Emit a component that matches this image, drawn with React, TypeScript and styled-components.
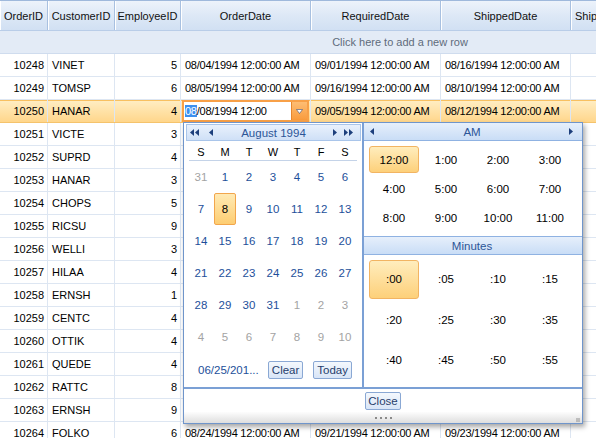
import styled, { createGlobalStyle, css } from "styled-components";

const GlobalStyle = createGlobalStyle`
  html, body { margin: 0; padding: 0; background: #fff; overflow: hidden; }
  body {
    font-family: "Liberation Sans", Arial, sans-serif;
    font-size: 11px;
    color: #000;
  }
`;

const COLS = "48px 67px 66px 130px 130px 130px 229px";

const Page = styled.div`
  position: relative;
  width: 596px;
  height: 438px;
  overflow: hidden;
`;

const Grid = styled.div`
  width: 800px;
`;

const HeaderRow = styled.div`
  display: grid;
  grid-template-columns: ${COLS};
  height: 31px;
  box-sizing: border-box;
  border-top: 1px solid #9fb9dc;
  border-bottom: 1px solid #b9cde8;
  background: linear-gradient(#edf3fb, #dde8f6 50%, #d1e0f3);
`;

const HeadCell = styled.div<{ $left?: boolean }>`
  display: flex;
  align-items: center;
  justify-content: ${(p) => (p.$left ? "flex-start" : "center")};
  padding-left: ${(p) => (p.$left ? "4px" : "0")};
  border-right: 1px solid #a8c0e0;
  box-shadow: inset 1px 0 0 #fff;
  white-space: nowrap;
  overflow: hidden;
  color: #111;
`;

const AddRow = styled.div`
  height: 23px;
  box-sizing: border-box;
  background: #e3ebf6;
  border-bottom: 1px solid #cfdcee;
  display: flex;
  align-items: center;
  justify-content: center;
  color: #5f6b7c;
`;

const Row = styled.div<{ $active?: boolean }>`
  display: grid;
  grid-template-columns: ${COLS};
  height: 23px;
  box-sizing: border-box;
  border-bottom: 1px solid #dde6f2;
  ${(p) =>
    p.$active &&
    css`
      background: linear-gradient(#ffeec4, #ffd68b);
      border-bottom-color: #f5c36c;
      box-shadow: inset 0 1px 0 #f8c060;
    `}
`;

const Cell = styled.div<{ $right?: boolean }>`
  display: flex;
  align-items: center;
  justify-content: ${(p) => (p.$right ? "flex-end" : "flex-start")};
  padding: 0 ${(p) => (p.$right ? "3px" : "4px")} 0 4px;
  border-right: 1px solid #dde6f2;
  white-space: nowrap;
  overflow: hidden;
`;

const DateCell = styled(Cell)`
  padding-left: 4px;
  letter-spacing: -0.25px;
`;

const EditCell = styled.div`
  display: flex;
  padding: 0 1px;
  border-right: 1px solid #dde6f2;
`;

const Editor = styled.div`
  flex: 1;
  display: flex;
  height: 22px;
  box-sizing: border-box;
  border: 2px solid #f8a047;
  background: #fff;
`;

const EditText = styled.div`
  flex: 1;
  display: flex;
  align-items: center;
  padding-left: 1px;
  letter-spacing: -0.25px;
  white-space: nowrap;
`;

const Highlight = styled.span`
  background: #3c8fef;
  color: #fff;
`;

const DropButton = styled.div`
  width: 15px;
  display: flex;
  align-items: center;
  justify-content: center;
  background: linear-gradient(#fdbd74, #f99b3c);
  border-left: 1px solid #e7872e;
`;

/* ---------- popup ---------- */

const Popup = styled.div`
  position: absolute;
  left: 183px;
  top: 122px;
  width: 400px;
  box-sizing: border-box;
  border: 1px solid #6f95cb;
  background: #fff;
  box-shadow: 2px 3px 5px rgba(0, 0, 0, 0.35);
`;

const Panels = styled.div`
  display: flex;
  height: 264px;
  border-bottom: 2px solid #7ba0d5;
`;

const Calendar = styled.div`
  width: 178px;
  border-right: 2px solid #7ba0d5;
  display: flex;
  flex-direction: column;
`;

const CalHeader = styled.div`
  display: flex;
  align-items: center;
  height: 17px;
  margin: 1px 1px 0 2px;
  box-sizing: border-box;
  border: 1px solid #a9c5ea;
  background: linear-gradient(#e9f1fc, #cfe0f7);
  padding: 0 6px 0 3px;
  color: #2c5597;
`;

const NavGroup = styled.div<{ $gap: number }>`
  display: flex;
  align-items: center;
  gap: ${(p) => p.$gap}px;
`;

const Title = styled.div`
  flex: 1;
  text-align: center;
  font-size: 11.5px;
`;

const DayNames = styled.div`
  display: grid;
  grid-template-columns: repeat(7, 24px);
  height: 14px;
  margin: 4px 0 0 5px;
  padding-bottom: 1px;
  border-bottom: 1px solid #c4d3e8;
  width: 168px;
`;

const DayName = styled.div`
  text-align: center;
  line-height: 14px;
`;

const Days = styled.div`
  display: grid;
  grid-template-columns: repeat(7, 24px);
  grid-auto-rows: 32px;
  margin-left: 5px;
`;

const Day = styled.div<{ $muted?: boolean; $selected?: boolean }>`
  display: flex;
  align-items: center;
  justify-content: center;
  color: ${(p) => (p.$muted ? "#a3a3a3" : "#1d4f9a")};
  font-size: 11.5px;
  ${(p) =>
    p.$selected &&
    css`
      margin: 0 1px;
      border: 1px solid #f2a64c;
      border-radius: 2px;
      background: linear-gradient(#ffeab4, #fdcd72);
      color: #000;
    `}
`;

const CalFooter = styled.div`
  flex: 1;
  display: flex;
  align-items: center;
  padding: 0 0 0 14px;
`;

const Picked = styled.span`
  width: 70px;
  color: #1d4f9a;
  white-space: nowrap;
  font-size: 11.5px;
`;

const SmallButton = styled.button`
  font-family: inherit;
  font-size: 11.5px;
  color: #263d6b;
  height: 18px;
  padding: 0 3px;
  margin-right: 10px;
  border: 1px solid #8aa8d4;
  border-radius: 2px;
  background: linear-gradient(#f4f8fd, #d8e5f7);
  line-height: 14px;
`;

const TimePanel = styled.div`
  flex: 1;
  display: flex;
  flex-direction: column;
`;

const TimeHeader = styled.div<{ $top?: boolean }>`
  display: flex;
  align-items: center;
  height: 18px;
  box-sizing: border-box;
  padding: 0 8px 0 6px;
  background: linear-gradient(#e6effb, #c9ddf6);
  border-bottom: 1px solid #8fb2e2;
  ${(p) =>
    p.$top &&
    css`
      border-top: 1px solid #8fb2e2;
      margin-top: 4px;
      height: 19px;
    `}
  color: #2c5597;
  font-size: 11.5px;
`;

const TimeGrid = styled.div<{ $row: number }>`
  display: grid;
  grid-template-columns: repeat(4, 52px);
  grid-auto-rows: ${(p) => p.$row}px;
  margin: 4px 0 0 4px;
`;

const TimeCell = styled.div<{ $selected?: boolean }>`
  display: flex;
  align-items: center;
  justify-content: center;
  font-size: 11.5px;
  ${(p) =>
    p.$selected &&
    css`
      margin: 1px;
      border: 1px solid #f2b462;
      border-radius: 3px;
      background: linear-gradient(#ffedbd, #fdd07a);
    `}
`;

const CloseBar = styled.div`
  height: 23px;
  display: flex;
  align-items: center;
  justify-content: center;
`;

const CloseButton = styled(SmallButton)`
  margin: 1px 0 0 0;
  padding: 0 2px;
`;

const Grip = styled.div`
  position: relative;
  height: 11px;
  background: linear-gradient(#fdfdfd, #dedede);
  display: flex;
  align-items: center;
  justify-content: center;
  gap: 3px;
`;

const Dot = styled.span`
  width: 2px;
  height: 2px;
  background: #8a8a8a;
`;

const Resize = styled.span`
  position: absolute;
  right: 2px;
  bottom: 1px;
  width: 4px;
  height: 4px;
  background: radial-gradient(circle, #8a8a8a 0.6px, transparent 0.8px) 0 0 / 2px 2px;
`;

function Tri({ dir, double }: { dir: "l" | "r"; double?: boolean }) {
  const one = dir === "l" ? "M4 0 L0 3.5 L4 7Z" : "M0 0 L4 3.5 L0 7Z";
  const two = dir === "l" ? "M9 0 L5 3.5 L9 7Z" : "M5 0 L9 3.5 L5 7Z";
  return (
    <svg width={double ? 10 : 5} height="7" viewBox={`0 0 ${double ? 10 : 5} 7`}>
      <path d={one} fill="#1d3f7c" />
      {double && <path d={two} fill="#1d3f7c" />}
    </svg>
  );
}

const rows: [number, string, number, string, string, string][] = [
  [10248, "VINET", 5, "08/04/1994", "09/01/1994", "08/16/1994"],
  [10249, "TOMSP", 6, "08/05/1994", "09/16/1994", "08/10/1994"],
  [10250, "HANAR", 4, "08/08/1994", "09/05/1994", "08/12/1994"],
  [10251, "VICTE", 3, "08/08/1994", "09/05/1994", "08/15/1994"],
  [10252, "SUPRD", 4, "08/09/1994", "09/06/1994", "08/11/1994"],
  [10253, "HANAR", 3, "08/10/1994", "08/24/1994", "08/16/1994"],
  [10254, "CHOPS", 5, "08/11/1994", "09/08/1994", "08/23/1994"],
  [10255, "RICSU", 9, "08/12/1994", "09/09/1994", "08/15/1994"],
  [10256, "WELLI", 3, "08/15/1994", "09/12/1994", "08/17/1994"],
  [10257, "HILAA", 4, "08/16/1994", "09/13/1994", "08/22/1994"],
  [10258, "ERNSH", 1, "08/17/1994", "09/14/1994", "08/23/1994"],
  [10259, "CENTC", 4, "08/18/1994", "09/15/1994", "08/25/1994"],
  [10260, "OTTIK", 4, "08/19/1994", "09/16/1994", "08/29/1994"],
  [10261, "QUEDE", 4, "08/19/1994", "09/16/1994", "08/30/1994"],
  [10262, "RATTC", 8, "08/22/1994", "09/19/1994", "08/25/1994"],
  [10263, "ERNSH", 9, "08/23/1994", "09/20/1994", "08/31/1994"],
  [10264, "FOLKO", 6, "08/24/1994", "09/21/1994", "09/23/1994"],
];

const T = " 12:00:00 AM";

// rows whose date cells lie under the open picker
const covered = (id: number) => id > 10250 && id < 10264;

const weeks = [
  [31, 1, 2, 3, 4, 5, 6],
  [7, 8, 9, 10, 11, 12, 13],
  [14, 15, 16, 17, 18, 19, 20],
  [21, 22, 23, 24, 25, 26, 27],
  [28, 29, 30, 31, 1, 2, 3],
  [4, 5, 6, 7, 8, 9, 10],
];

const hours = ["12:00", "1:00", "2:00", "3:00", "4:00", "5:00", "6:00", "7:00", "8:00", "9:00", "10:00", "11:00"];
const minutes = [":00", ":05", ":10", ":15", ":20", ":25", ":30", ":35", ":40", ":45", ":50", ":55"];

export default function App() {
  return (
    <Page>
      <GlobalStyle />
      <Grid>
        <HeaderRow>
          <HeadCell>OrderID</HeadCell>
          <HeadCell>CustomerID</HeadCell>
          <HeadCell>EmployeeID</HeadCell>
          <HeadCell>OrderDate</HeadCell>
          <HeadCell>RequiredDate</HeadCell>
          <HeadCell>ShippedDate</HeadCell>
          <HeadCell $left>Ship</HeadCell>
        </HeaderRow>
        <AddRow>Click here to add a new row</AddRow>
        {rows.map(([id, cust, emp, od, rd, sd]) => {
          const active = id === 10250;
          const hide = covered(id);
          return (
            <Row key={id} $active={active}>
              <Cell $right>{id}</Cell>
              <Cell>{cust}</Cell>
              <Cell $right>{emp}</Cell>
              {active ? (
                <EditCell>
                  <Editor>
                    <EditText>
                      <Highlight>08</Highlight>/08/1994 12:00
                    </EditText>
                    <DropButton>
                      <svg width="7" height="5" viewBox="0 0 7 5">
                        <path d="M0.5 0.5 L6.5 0.5 L3.5 4.5Z" fill="#fff" stroke="#3a4f7a" strokeWidth="0.6" />
                      </svg>
                    </DropButton>
                  </Editor>
                </EditCell>
              ) : (
                <DateCell>{hide ? "" : od + T}</DateCell>
              )}
              <DateCell>{hide ? "" : rd + T}</DateCell>
              <DateCell>{hide ? "" : sd + T}</DateCell>
              <Cell />
            </Row>
          );
        })}
      </Grid>

      <Popup>
        <Panels>
          <Calendar>
            <CalHeader>
              <NavGroup $gap={9}>
                <Tri dir="l" double />
                <Tri dir="l" />
              </NavGroup>
              <Title>August 1994</Title>
              <NavGroup $gap={6}>
                <Tri dir="r" />
                <Tri dir="r" double />
              </NavGroup>
            </CalHeader>
            <DayNames>
              {["S", "M", "T", "W", "T", "F", "S"].map((d, i) => (
                <DayName key={i}>{d}</DayName>
              ))}
            </DayNames>
            <Days>
              {weeks.map((w, wi) =>
                w.map((d, di) => (
                  <Day
                    key={`${wi}-${di}`}
                    $muted={(wi === 0 && d > 7) || (wi >= 4 && d < 15)}
                    $selected={wi === 1 && d === 8}
                  >
                    {d}
                  </Day>
                ))
              )}
            </Days>
            <CalFooter>
              <Picked>06/25/201...</Picked>
              <SmallButton>Clear</SmallButton>
              <SmallButton>Today</SmallButton>
            </CalFooter>
          </Calendar>
          <TimePanel>
            <TimeHeader>
              <Tri dir="l" />
              <Title>AM</Title>
              <Tri dir="r" />
            </TimeHeader>
            <TimeGrid $row={29}>
              {hours.map((h, i) => (
                <TimeCell key={h} $selected={i === 0}>
                  {h}
                </TimeCell>
              ))}
            </TimeGrid>
            <TimeHeader $top>
              <Title>Minutes</Title>
            </TimeHeader>
            <TimeGrid $row={40.5}>
              {minutes.map((m, i) => (
                <TimeCell key={m} $selected={i === 0}>
                  {m}
                </TimeCell>
              ))}
            </TimeGrid>
          </TimePanel>
        </Panels>
        <CloseBar>
          <CloseButton>Close</CloseButton>
        </CloseBar>
        <Grip>
          <Dot />
          <Dot />
          <Dot />
          <Dot />
          <Resize />
        </Grip>
      </Popup>
    </Page>
  );
}
